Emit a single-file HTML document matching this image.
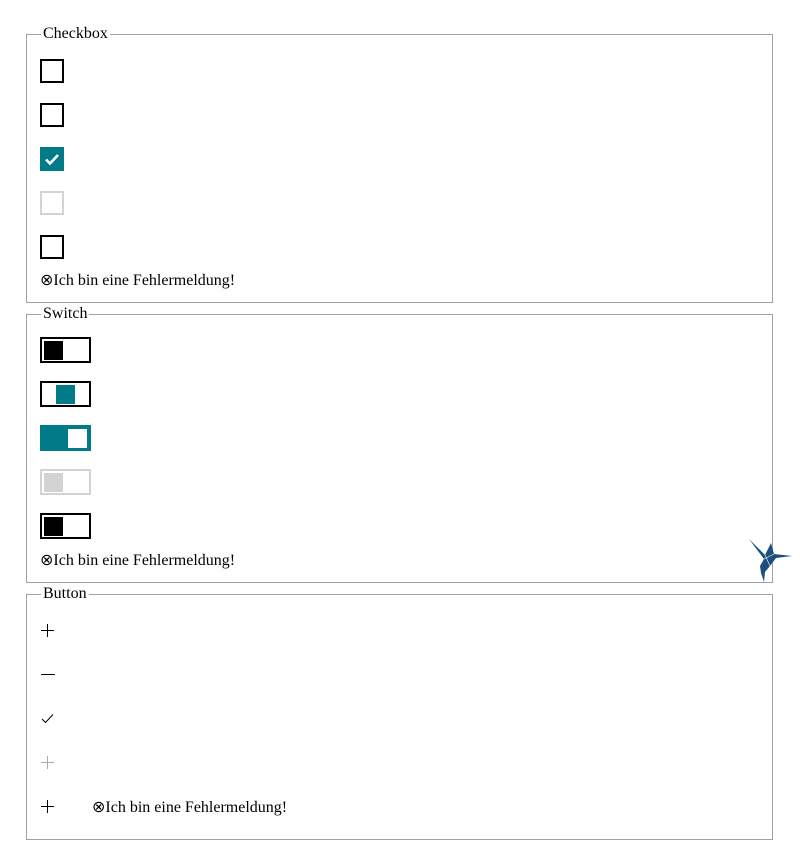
<!DOCTYPE html>
<html><head><meta charset="utf-8"><style>
body{margin:0;width:800px;height:865px;background:#fff;font-family:"Liberation Serif",serif;font-size:16px;color:#000;position:relative;overflow:hidden}
.fs{position:absolute;left:26px;width:745px;border:1px solid #a0a0a0}
.lg{position:absolute;left:14px;top:-10px;background:#fff;padding:0 2px;line-height:18px;font-size:16px}
.a{position:absolute}
.cb{width:20px;height:20px;border:2px solid #000}
.sw{width:47px;height:22px;border:2px solid #000}
.k{position:absolute;top:2px;width:19px;height:19px}
.err{position:absolute;line-height:18px;white-space:nowrap}
</style></head><body>
<div class="fs" style="top:34px;height:267px"><div class="lg">Checkbox</div></div>
<div class="a cb" style="left:40px;top:59px"></div>
<div class="a cb" style="left:40px;top:103px"></div>
<div class="a cb" style="left:40px;top:147px;background:#007b87;border-color:#007b87"><svg width="20" height="20" viewBox="0 0 20 20" style="position:absolute;left:0;top:0"><path d="M4 10.5l4 4 8-8.5" stroke="#fff" stroke-width="2.6" fill="none"/></svg></div>
<div class="a cb" style="left:40px;top:191px;border-color:#d3d3d3"></div>
<div class="a cb" style="left:40px;top:235px"></div>
<div class="err" style="left:40px;top:272px">⊗Ich bin eine Fehlermeldung!</div>

<div class="fs" style="top:314px;height:267px"><div class="lg">Switch</div></div>
<div class="a sw" style="left:40px;top:337px"><div class="k" style="left:2px;background:#000"></div></div>
<div class="a sw" style="left:40px;top:381px"><div class="k" style="left:14px;background:#007b87"></div></div>
<div class="a sw" style="left:40px;top:425px;background:#007b87;border-color:#007b87"><div class="k" style="left:26px;background:#fff"></div></div>
<div class="a sw" style="left:40px;top:469px;border-color:#d3d3d3"><div class="k" style="left:2px;background:#d3d3d3"></div></div>
<div class="a sw" style="left:40px;top:513px"><div class="k" style="left:2px;background:#000"></div></div>
<div class="err" style="left:40px;top:552px">⊗Ich bin eine Fehlermeldung!</div>

<div class="fs" style="top:594px;height:244px"><div class="lg">Button</div></div>
<svg class="a" style="left:40px;top:623px" width="16" height="16"><path d="M7.5 1v13M1 7.5h13" stroke="#000" stroke-width="1"/></svg>
<svg class="a" style="left:40px;top:667px" width="16" height="16"><path d="M1 7.5h14" stroke="#000" stroke-width="1"/></svg>
<svg class="a" style="left:40px;top:711px" width="16" height="16"><path d="M2 8l3.5 3.5L13 3.5" stroke="#000" stroke-width="1" fill="none"/></svg>
<svg class="a" style="left:40px;top:755px" width="16" height="16"><path d="M7.5 1v13M1 7.5h13" stroke="#aaa" stroke-width="1"/></svg>
<svg class="a" style="left:40px;top:799px" width="16" height="16"><path d="M7.5 1v13M1 7.5h13" stroke="#000" stroke-width="1"/></svg>
<div class="err" style="left:92px;top:799px">⊗Ich bin eine Fehlermeldung!</div>

<svg class="a" style="left:740px;top:530px" width="60" height="60" viewBox="0 0 60 60">
<path d="M9 9L25 25 31 13 34 24 52 26 36 28 30 36 25 42 24 52 21 43 20 36 24 29Z" fill="#1b4f80"/>
<path d="M24 29L34 24M25 25L30 36" stroke="#fff" stroke-width="0.6" fill="none"/>
</svg>
</body></html>
